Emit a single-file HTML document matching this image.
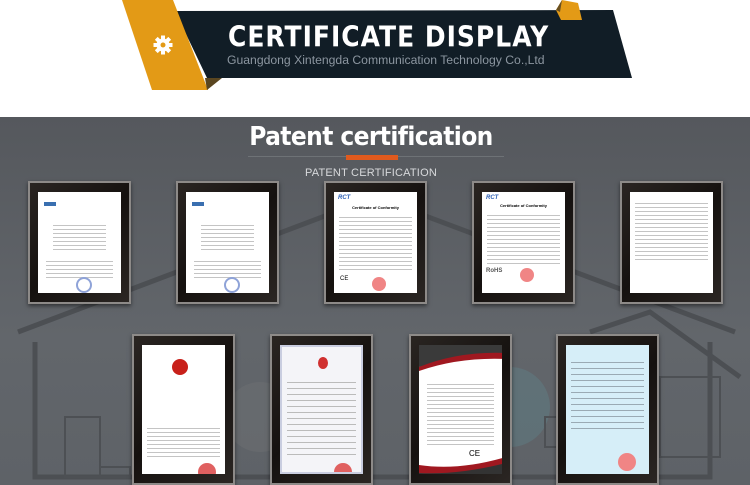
<!DOCTYPE html>
<html><head><meta charset="utf-8"><style>
*{margin:0;padding:0;box-sizing:border-box}
body{width:750px;height:485px;background:#fff;position:relative;overflow:hidden;font-family:"Liberation Sans",sans-serif}
.abs{position:absolute}
.gray{left:0;top:117px;width:750px;height:368px;background:linear-gradient(#55585d,#62666b 60%,#5e6267)}
.frame{position:absolute;background:linear-gradient(135deg,#2a2522,#15110f 50%,#2b2623);border:2px solid #8d8a88;box-shadow:0 2px 4px rgba(0,0,0,.5)}
.paper{position:absolute;left:8px;top:9px;right:8px;bottom:9px;background:#fff;overflow:hidden}
.lines{position:absolute;left:18%;right:18%;background:repeating-linear-gradient(#fff 0,#fff 3px,#c4c4c4 3px,#c4c4c4 4px)}
.seal{position:absolute;border-radius:50%}
</style></head><body>
<svg class="abs" style="left:0;top:0" width="750" height="100">
<polygon points="175,11 613,10 632,78 207,78" fill="#111d26"/>
<polygon points="122,0 173,0 208,90 152,90" fill="#e39a16"/>
<polygon points="205,78 222,78 207,90" fill="#5a4620"/>
<polygon points="556,10 562,0 578,3 582,20 561,20" fill="#e39a16"/>
<polygon points="556,10 562,0 560,12" fill="#6a5020"/>
<g transform="translate(163,45)" fill="#fff">
<circle r="6.5"/>
<g><rect x="-2" y="-9.5" width="4" height="19"/><rect x="-9.5" y="-2" width="19" height="4"/>
<rect x="-2" y="-9.5" width="4" height="19" transform="rotate(45)"/><rect x="-2" y="-9.5" width="4" height="19" transform="rotate(-45)"/></g>
<circle r="2.5" fill="#e39a16"/></g>
</svg>
<div class="abs" style="left:228px;top:21px;font-size:25px;line-height:28px;font-weight:bold;color:#fff;letter-spacing:1px;font-family:'DejaVu Sans',sans-serif;transform:scaleY(1.15);transform-origin:left top">CERTIFICATE DISPLAY</div>
<div class="abs" style="left:227px;top:53px;font-size:12.2px;color:#8c96a0">Guangdong Xintengda Communication Technology Co.,Ltd</div>

<div class="abs gray"></div>
<svg class="abs" style="left:0;top:117px" width="750" height="368">
<g fill="none" stroke="#4c4f53" stroke-width="5">
<polyline points="18,215 375,80 735,215"/>
<polyline points="35,225 35,360 710,360 710,225"/>
<polyline points="590,215 650,195 740,260"/>
</g>
<circle cx="510" cy="290" r="40" fill="#5f7a80" opacity=".6"/>
<circle cx="260" cy="300" r="35" fill="#6a6e72" opacity=".6"/>
<g fill="none" stroke="#4d5054" stroke-width="2">
<rect x="65" y="300" width="35" height="60"/><rect x="100" y="350" width="30" height="10"/>
<rect x="545" y="300" width="50" height="30"/><rect x="660" y="260" width="60" height="80"/>
</g>
</svg>
<div class="abs" style="left:0;width:742px;top:122px;text-align:center;font-size:26px;font-weight:bold;color:#fff;font-family:'DejaVu Sans Condensed','DejaVu Sans',sans-serif;letter-spacing:-0.6px">Patent certification</div>
<div class="abs" style="left:248px;top:156px;width:256px;height:1px;background:#6e7276"></div>
<div class="abs" style="left:346px;top:155px;width:52px;height:5px;background:#e05a1e"></div>
<div class="abs" style="left:0;width:742px;top:167px;text-align:center;font-size:11px;color:#d7d9db;letter-spacing:0.2px">PATENT CERTIFICATION</div>

<div class="frame" style="left:28px;top:181px;width:103px;height:123px"><div class="paper">
<div class="abs" style="left:6px;top:10px;width:12px;height:4px;background:#3a6fb0"></div>
<div class="lines" style="top:30px;height:30px"></div><div class="lines" style="top:66px;height:22px;left:10%;right:10%"></div>
<div class="seal" style="left:38px;top:85px;width:16px;height:16px;border:2px solid #8fa3d8"></div></div></div>
<div class="frame" style="left:176px;top:181px;width:103px;height:123px"><div class="paper">
<div class="abs" style="left:6px;top:10px;width:12px;height:4px;background:#3a6fb0"></div>
<div class="lines" style="top:30px;height:30px"></div><div class="lines" style="top:66px;height:22px;left:10%;right:10%"></div>
<div class="seal" style="left:38px;top:85px;width:16px;height:16px;border:2px solid #8fa3d8"></div></div></div>
<div class="frame" style="left:324px;top:181px;width:103px;height:123px"><div class="paper">
<div class="abs" style="left:4px;top:3px;font-size:6px;font-weight:bold;font-style:italic;color:#2c5fb5">RCT</div>
<div class="abs" style="left:0;right:0;top:13px;text-align:center;font-size:4px;font-weight:bold">Certificate of Conformity</div>
<div class="lines" style="top:22px;height:56px;left:6%;right:6%"></div>
<div class="abs" style="left:6px;top:84px;font-size:6px">CE</div>
<div class="seal" style="left:38px;top:85px;width:14px;height:14px;background:#f08585"></div></div></div>
<div class="frame" style="left:472px;top:181px;width:103px;height:123px"><div class="paper">
<div class="abs" style="left:4px;top:3px;font-size:6px;font-weight:bold;font-style:italic;color:#2c5fb5">RCT</div>
<div class="abs" style="left:0;right:0;top:11px;text-align:center;font-size:4px;font-weight:bold">Certificate of Conformity</div>
<div class="lines" style="top:20px;height:52px;left:6%;right:6%"></div>
<div class="abs" style="left:4px;top:76px;font-size:6px;font-weight:bold;color:#555">RoHS</div>
<div class="seal" style="left:38px;top:76px;width:14px;height:14px;background:#f08585"></div></div></div>
<div class="frame" style="left:620px;top:181px;width:103px;height:123px"><div class="paper">
<div class="lines" style="top:8px;height:60px;left:6%;right:6%"></div></div></div>

<div class="frame" style="left:132px;top:334px;width:103px;height:151px"><div class="paper">
<div class="seal" style="left:30px;top:14px;width:16px;height:16px;background:#c8201a"></div>
<div class="lines" style="top:80px;height:34px;left:6%;right:6%"></div>
<div class="seal" style="left:56px;top:118px;width:18px;height:18px;background:#e06060"></div></div></div>
<div class="frame" style="left:270px;top:334px;width:103px;height:151px"><div class="paper" style="background:#f4f4f8;border:2px solid #c9cde0">
<div class="seal" style="left:36px;top:10px;width:10px;height:12px;background:#d03030"></div>
<div class="lines" style="top:30px;height:80px;left:6%;right:6%;background:repeating-linear-gradient(#f4f4f8 0,#f4f4f8 5px,#bbb 5px,#bbb 6px)"></div>
<div class="seal" style="left:52px;top:116px;width:18px;height:18px;background:#e06060"></div></div></div>
<div class="frame" style="left:409px;top:334px;width:103px;height:151px"><div class="paper">
<svg class="abs" style="left:0;top:0" width="87" height="133">
<polygon points="0,0 87,0 87,8 0,22" fill="#3a3a3a"/>
<path d="M0,22 Q40,6 87,8 L87,14 Q40,12 0,26Z" fill="#a01820"/>
<polygon points="0,133 87,133 87,118 0,128" fill="#333"/>
<path d="M0,120 Q40,126 87,112 L87,118 Q40,130 0,128Z" fill="#a01820"/>
</svg>
<div class="lines" style="top:36px;height:64px;left:10%;right:10%"></div>
<div class="abs" style="left:50px;top:104px;font-size:8px">CE</div></div></div>
<div class="frame" style="left:556px;top:334px;width:103px;height:151px"><div class="paper" style="background:#d6eef8">
<div class="lines" style="top:12px;height:76px;left:6%;right:6%;background:repeating-linear-gradient(#d6eef8 0,#d6eef8 5px,#9aaab4 5px,#9aaab4 6px)"></div>
<div class="seal" style="left:52px;top:108px;width:18px;height:18px;background:#f08585"></div></div></div>
</body></html>
